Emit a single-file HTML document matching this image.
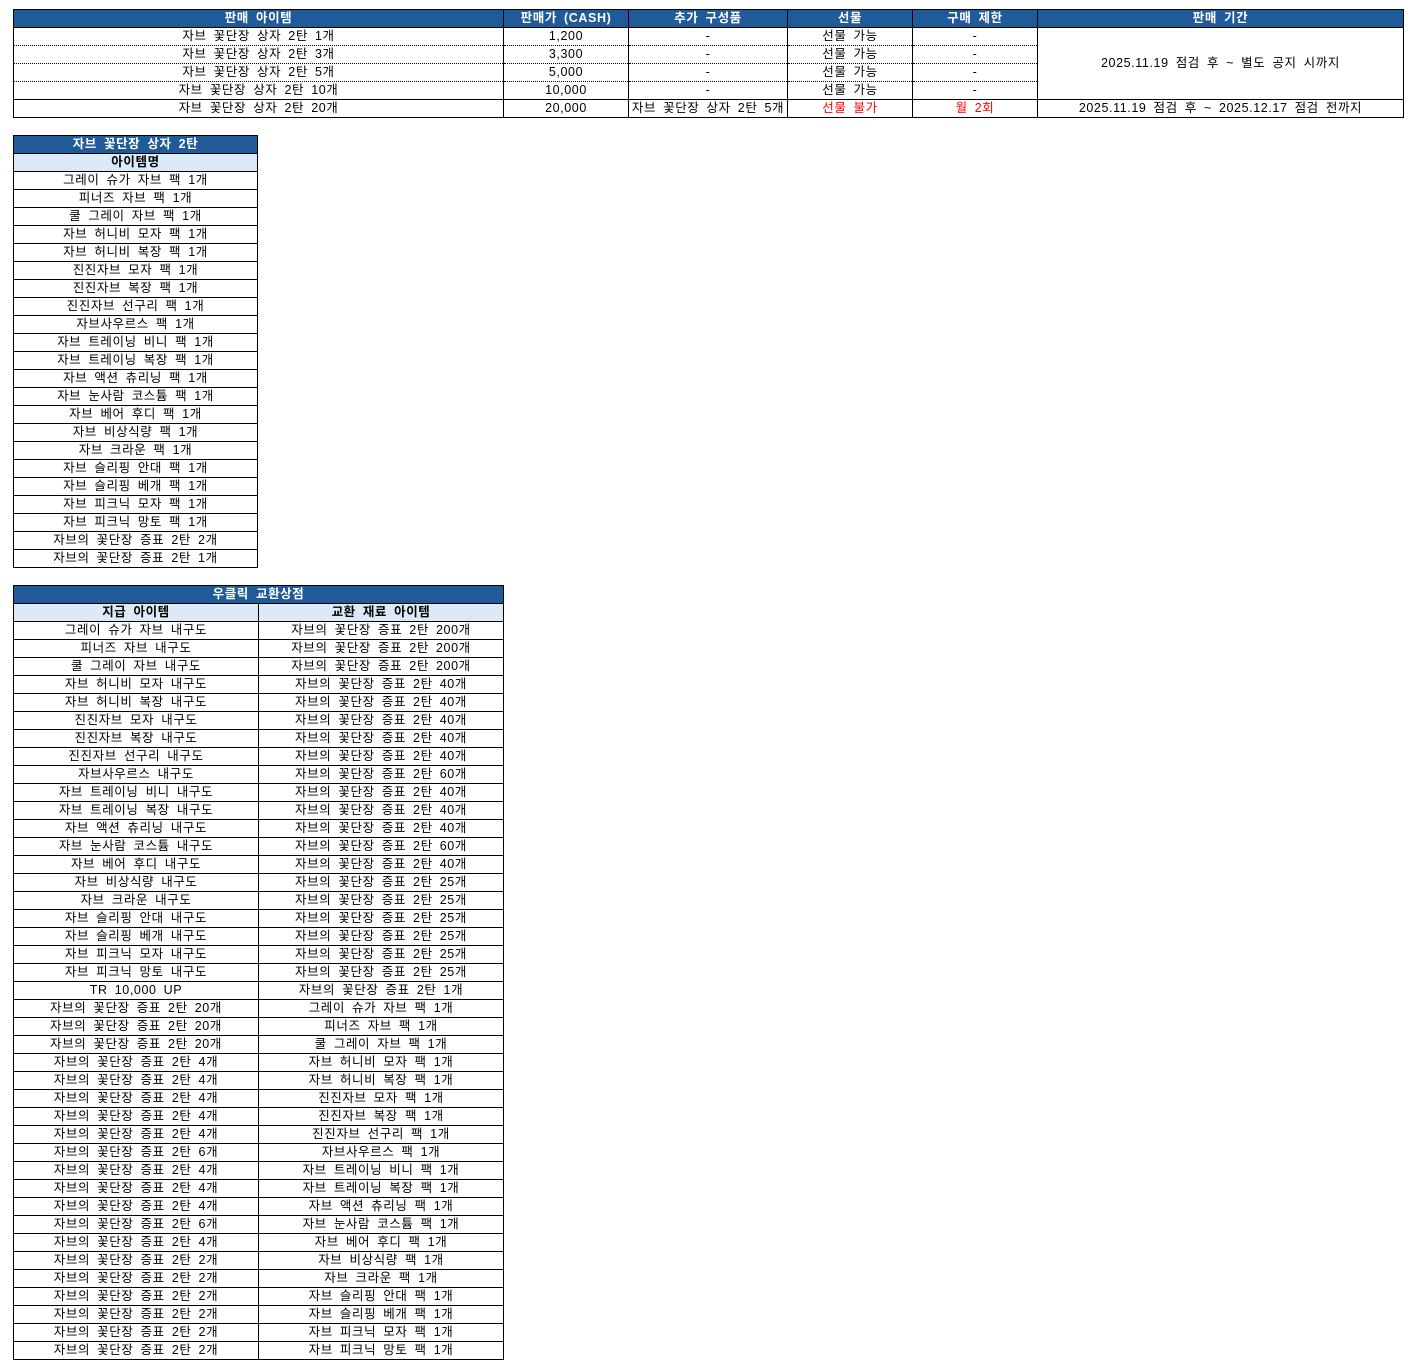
<!DOCTYPE html>
<html><head><meta charset="utf-8">
<style>
body{margin:0;background:#fff;width:1415px;height:1370px;position:relative;font-family:"Liberation Sans","Noto Sans CJK KR",sans-serif;font-size:12.5px;color:#000}
table{position:absolute;border-collapse:collapse;table-layout:fixed}
td{border:1px solid #000;height:17px;padding:0;text-align:center;line-height:17px;white-space:nowrap;overflow:hidden;letter-spacing:0.6px;word-spacing:3px}
.h td{background:#215a98;color:#fff;font-weight:bold}
.s td{background:#dce9f6;font-weight:bold}
.d td.x{border-bottom:1px dotted #000}
.t td.x{border-top:1px dotted #000}
.r{color:#f00}
</style></head><body>
<table style="left:13px;top:9px;width:1390px">
<colgroup><col style="width:490px"><col style="width:125px"><col style="width:159px"><col style="width:125px"><col style="width:125px"><col style="width:366px"></colgroup>
<tr class="h"><td>판매 아이템</td><td>판매가 (CASH)</td><td>추가 구성품</td><td>선물</td><td>구매 제한</td><td>판매 기간</td></tr>
<tr class="d"><td class="x">자브 꽃단장 상자 2탄 1개</td><td class="x">1,200</td><td class="x">-</td><td class="x">선물 가능</td><td class="x">-</td><td rowspan="4">2025.11.19 점검 후 ~ 별도 공지 시까지</td></tr>
<tr class="d t"><td class="x">자브 꽃단장 상자 2탄 3개</td><td class="x">3,300</td><td class="x">-</td><td class="x">선물 가능</td><td class="x">-</td></tr>
<tr class="d t"><td class="x">자브 꽃단장 상자 2탄 5개</td><td class="x">5,000</td><td class="x">-</td><td class="x">선물 가능</td><td class="x">-</td></tr>
<tr class="t"><td class="x">자브 꽃단장 상자 2탄 10개</td><td class="x">10,000</td><td class="x">-</td><td class="x">선물 가능</td><td class="x">-</td></tr>
<tr><td>자브 꽃단장 상자 2탄 20개</td><td>20,000</td><td>자브 꽃단장 상자 2탄 5개</td><td class="r">선물 불가</td><td class="r">월 2회</td><td>2025.11.19 점검 후 ~ 2025.12.17 점검 전까지</td></tr>
</table>

<table style="left:13px;top:135px;width:245px">
<tr class="h"><td>자브 꽃단장 상자 2탄</td></tr>
<tr class="s"><td>아이템명</td></tr>
<tr><td>그레이 슈가 자브 팩 1개</td></tr>
<tr><td>피너즈 자브 팩 1개</td></tr>
<tr><td>쿨 그레이 자브 팩 1개</td></tr>
<tr><td>자브 허니비 모자 팩 1개</td></tr>
<tr><td>자브 허니비 복장 팩 1개</td></tr>
<tr><td>진진자브 모자 팩 1개</td></tr>
<tr><td>진진자브 복장 팩 1개</td></tr>
<tr><td>진진자브 선구리 팩 1개</td></tr>
<tr><td>자브사우르스 팩 1개</td></tr>
<tr><td>자브 트레이닝 비니 팩 1개</td></tr>
<tr><td>자브 트레이닝 복장 팩 1개</td></tr>
<tr><td>자브 액션 츄리닝 팩 1개</td></tr>
<tr><td>자브 눈사람 코스튬 팩 1개</td></tr>
<tr><td>자브 베어 후디 팩 1개</td></tr>
<tr><td>자브 비상식량 팩 1개</td></tr>
<tr><td>자브 크라운 팩 1개</td></tr>
<tr><td>자브 슬리핑 안대 팩 1개</td></tr>
<tr><td>자브 슬리핑 베개 팩 1개</td></tr>
<tr><td>자브 피크닉 모자 팩 1개</td></tr>
<tr><td>자브 피크닉 망토 팩 1개</td></tr>
<tr><td>자브의 꽃단장 증표 2탄 2개</td></tr>
<tr><td>자브의 꽃단장 증표 2탄 1개</td></tr>
</table>

<table style="left:13px;top:585px;width:490px">
<colgroup><col style="width:245px"><col style="width:245px"></colgroup>
<tr class="h"><td colspan="2">우클릭 교환상점</td></tr>
<tr class="s"><td>지급 아이템</td><td>교환 재료 아이템</td></tr>
<tr><td>그레이 슈가 자브 내구도</td><td>자브의 꽃단장 증표 2탄 200개</td></tr>
<tr><td>피너즈 자브 내구도</td><td>자브의 꽃단장 증표 2탄 200개</td></tr>
<tr><td>쿨 그레이 자브 내구도</td><td>자브의 꽃단장 증표 2탄 200개</td></tr>
<tr><td>자브 허니비 모자 내구도</td><td>자브의 꽃단장 증표 2탄 40개</td></tr>
<tr><td>자브 허니비 복장 내구도</td><td>자브의 꽃단장 증표 2탄 40개</td></tr>
<tr><td>진진자브 모자 내구도</td><td>자브의 꽃단장 증표 2탄 40개</td></tr>
<tr><td>진진자브 복장 내구도</td><td>자브의 꽃단장 증표 2탄 40개</td></tr>
<tr><td>진진자브 선구리 내구도</td><td>자브의 꽃단장 증표 2탄 40개</td></tr>
<tr><td>자브사우르스 내구도</td><td>자브의 꽃단장 증표 2탄 60개</td></tr>
<tr><td>자브 트레이닝 비니 내구도</td><td>자브의 꽃단장 증표 2탄 40개</td></tr>
<tr><td>자브 트레이닝 복장 내구도</td><td>자브의 꽃단장 증표 2탄 40개</td></tr>
<tr><td>자브 액션 츄리닝 내구도</td><td>자브의 꽃단장 증표 2탄 40개</td></tr>
<tr><td>자브 눈사람 코스튬 내구도</td><td>자브의 꽃단장 증표 2탄 60개</td></tr>
<tr><td>자브 베어 후디 내구도</td><td>자브의 꽃단장 증표 2탄 40개</td></tr>
<tr><td>자브 비상식량 내구도</td><td>자브의 꽃단장 증표 2탄 25개</td></tr>
<tr><td>자브 크라운 내구도</td><td>자브의 꽃단장 증표 2탄 25개</td></tr>
<tr><td>자브 슬리핑 안대 내구도</td><td>자브의 꽃단장 증표 2탄 25개</td></tr>
<tr><td>자브 슬리핑 베개 내구도</td><td>자브의 꽃단장 증표 2탄 25개</td></tr>
<tr><td>자브 피크닉 모자 내구도</td><td>자브의 꽃단장 증표 2탄 25개</td></tr>
<tr><td>자브 피크닉 망토 내구도</td><td>자브의 꽃단장 증표 2탄 25개</td></tr>
<tr><td>TR 10,000 UP</td><td>자브의 꽃단장 증표 2탄 1개</td></tr>
<tr><td>자브의 꽃단장 증표 2탄 20개</td><td>그레이 슈가 자브 팩 1개</td></tr>
<tr><td>자브의 꽃단장 증표 2탄 20개</td><td>피너즈 자브 팩 1개</td></tr>
<tr><td>자브의 꽃단장 증표 2탄 20개</td><td>쿨 그레이 자브 팩 1개</td></tr>
<tr><td>자브의 꽃단장 증표 2탄 4개</td><td>자브 허니비 모자 팩 1개</td></tr>
<tr><td>자브의 꽃단장 증표 2탄 4개</td><td>자브 허니비 복장 팩 1개</td></tr>
<tr><td>자브의 꽃단장 증표 2탄 4개</td><td>진진자브 모자 팩 1개</td></tr>
<tr><td>자브의 꽃단장 증표 2탄 4개</td><td>진진자브 복장 팩 1개</td></tr>
<tr><td>자브의 꽃단장 증표 2탄 4개</td><td>진진자브 선구리 팩 1개</td></tr>
<tr><td>자브의 꽃단장 증표 2탄 6개</td><td>자브사우르스 팩 1개</td></tr>
<tr><td>자브의 꽃단장 증표 2탄 4개</td><td>자브 트레이닝 비니 팩 1개</td></tr>
<tr><td>자브의 꽃단장 증표 2탄 4개</td><td>자브 트레이닝 복장 팩 1개</td></tr>
<tr><td>자브의 꽃단장 증표 2탄 4개</td><td>자브 액션 츄리닝 팩 1개</td></tr>
<tr><td>자브의 꽃단장 증표 2탄 6개</td><td>자브 눈사람 코스튬 팩 1개</td></tr>
<tr><td>자브의 꽃단장 증표 2탄 4개</td><td>자브 베어 후디 팩 1개</td></tr>
<tr><td>자브의 꽃단장 증표 2탄 2개</td><td>자브 비상식량 팩 1개</td></tr>
<tr><td>자브의 꽃단장 증표 2탄 2개</td><td>자브 크라운 팩 1개</td></tr>
<tr><td>자브의 꽃단장 증표 2탄 2개</td><td>자브 슬리핑 안대 팩 1개</td></tr>
<tr><td>자브의 꽃단장 증표 2탄 2개</td><td>자브 슬리핑 베개 팩 1개</td></tr>
<tr><td>자브의 꽃단장 증표 2탄 2개</td><td>자브 피크닉 모자 팩 1개</td></tr>
<tr><td>자브의 꽃단장 증표 2탄 2개</td><td>자브 피크닉 망토 팩 1개</td></tr>
</table>
</body></html>
